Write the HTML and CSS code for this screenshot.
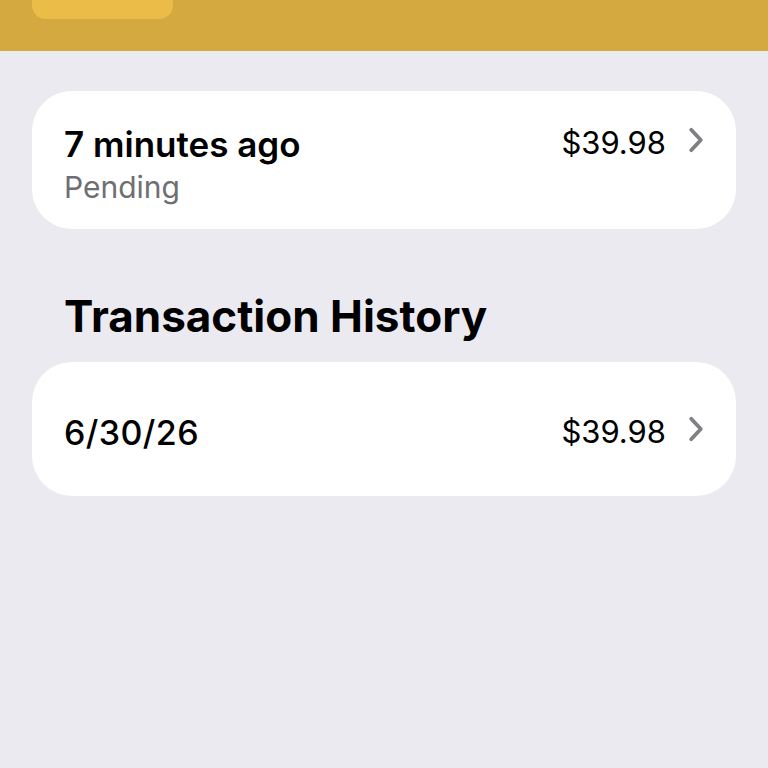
FILE: index.html
```html
<!DOCTYPE html>
<html lang="en">
<head>
    <meta charset="UTF-8">
    <meta name="viewport" content="width=device-width, initial-scale=1.0">
    <title>Orders</title>
    <link rel="stylesheet" href="styles.css">
</head>
<body>
    <header class="top-bar">
        <div class="top-button"></div>
    </header>

    <main class="content">
        <!-- Pending order -->
        <div class="card card-pending">
            <div class="card-text">
                <div class="card-title">7 minutes ago</div>
                <div class="card-sub">Pending</div>
            </div>
            <div class="card-amount">$39.98</div>
            <svg class="chevron" width="16" height="26" viewBox="0 0 16 26">
                <path d="M3.2 2.8 L12.8 13 L3.2 23.2" fill="none" stroke="#7f7f84" stroke-width="3.8" stroke-linecap="round" stroke-linejoin="round"/>
            </svg>
        </div>

        <h2 class="section-title">Transaction History</h2>

        <div class="card card-history">
            <div class="card-text">
                <div class="card-date">6/30/26</div>
            </div>
            <div class="card-amount">$39.98</div>
            <svg class="chevron" width="16" height="26" viewBox="0 0 16 26">
                <path d="M3.2 2.8 L12.8 13 L3.2 23.2" fill="none" stroke="#7f7f84" stroke-width="3.8" stroke-linecap="round" stroke-linejoin="round"/>
            </svg>
        </div>
    </main>
</body>
</html>
```

FILE: styles.css
```css
body {
    font-family: Inter, "Noto Sans", sans-serif;
    background-color: #ebeaf0;
    margin: 0;
    padding: 0;
    color: #000;
}
.top-bar {
    background-color: #d4a940;
    height: 51px;
    padding: 0 32px;
}
.top-button {
    width: 141px;
    height: 19px;
    background-color: #ebbd48;
    border-radius: 0 0 14px 14px;
}
.content {
    padding: 40px 32px;
}
.card {
    background-color: #fff;
    border-radius: 40px;
    display: flex;
    padding: 0 32px;
}
.card-pending {
    height: 138px;
    box-sizing: border-box;
    padding-top: 33px;
    align-items: flex-start;
}
.card-history {
    height: 134px;
    align-items: center;
}
.card-text {
    flex: 1;
}
.card-title {
    font-size: 35px;
    font-weight: 600;
    line-height: 40px;
}
.card-sub {
    font-size: 30px;
    color: #6e6e73;
    line-height: 46px;
}
.card-date {
    font-size: 34px;
    font-weight: 500;
    line-height: 40px;
    letter-spacing: 0.4px;
    padding-top: 8px;
}
.card-amount {
    font-size: 31px;
    line-height: 40px;
    margin-right: 22px;
}
.card-pending .card-amount {
    margin-top: -1px;
}
.card-pending .chevron {
    margin-top: 3px;
}
.card-history .card-amount {
    padding-top: 6px;
}
.section-title {
    font-size: 44px;
    font-weight: 700;
    line-height: 52px;
    margin: 61px 32px 20px;
}
```
